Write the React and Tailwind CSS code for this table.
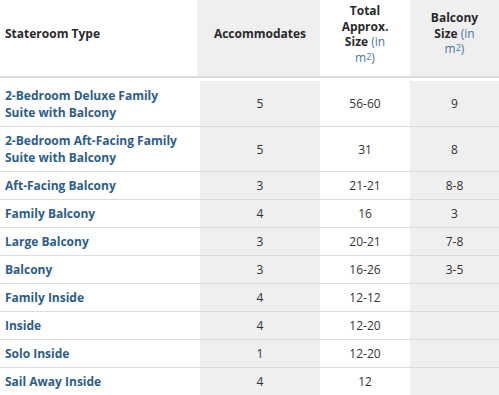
import React from "react";

const rows = [
  { name: ["2-Bedroom Deluxe Family", "Suite with Balcony"], acc: "5", size: "56-60", balcony: "9", h: "h-[46px]" },
  { name: ["2-Bedroom Aft-Facing Family", "Suite with Balcony"], acc: "5", size: "31", balcony: "8", h: "h-[45px]" },
  { name: ["Aft-Facing Balcony"], acc: "3", size: "21-21", balcony: "8-8", h: "h-[28px]" },
  { name: ["Family Balcony"], acc: "4", size: "16", balcony: "3", h: "h-[28px]" },
  { name: ["Large Balcony"], acc: "3", size: "20-21", balcony: "7-8", h: "h-[28px]" },
  { name: ["Balcony"], acc: "3", size: "16-26", balcony: "3-5", h: "h-[28px]" },
  { name: ["Family Inside"], acc: "4", size: "12-12", balcony: "", h: "h-[28px]" },
  { name: ["Inside"], acc: "4", size: "12-20", balcony: "", h: "h-[28px]" },
  { name: ["Solo Inside"], acc: "1", size: "12-20", balcony: "", h: "h-[28px]" },
  { name: ["Sail Away Inside"], acc: "4", size: "12", balcony: "", h: "h-[28px]" },
];

// "Size (in / m²)" split over two lines like the source
const SizeUnit = () => (
  <>
    <span>
      Size <span className="font-normal text-[#4a78a6]">(in</span>
    </span>
    <span className="font-normal text-[#4a78a6]">
      m<sup className="text-[9px] relative -top-[2px]">2</sup>)
    </span>
  </>
);

const App = () => {
  return (
    <div
      className="w-[499px] h-[395px] overflow-hidden bg-white text-[12px] text-[#333]"
      style={{ fontFamily: '"Open Sans", "Liberation Sans", sans-serif' }}
    >
      {/* header */}
      <div className="flex h-[78px] border-b-2 border-[#dcdcdc] font-bold leading-[15.5px] text-[#2a2a2a]">
        <div className="w-[197px] flex items-center pl-[5px] pb-[9px]">Stateroom Type</div>
        <div className="w-[123px] bg-[#efefef] flex items-center justify-center pb-[9px] pl-[3px]">
          Accommodates
        </div>
        <div className="w-[90px] flex flex-col items-center justify-center text-center pb-[9px] pt-[1px]">
          <span>Total</span>
          <span>Approx.</span>
          <SizeUnit />
        </div>
        <div className="w-[89px] bg-[#efefef] flex flex-col items-center justify-center text-center pb-[9px]">
          <span>Balcony</span>
          <SizeUnit />
        </div>
      </div>

      {/* body */}
      <div className="mt-[3px]">
        {rows.map((r, i) => (
          <div key={i} className={`flex border-b border-[#dcdcdc] leading-[17px] ${r.h}`}>
            <div className="w-[200px] flex flex-col justify-center pl-[5px] font-bold text-[#2b5d8c]">
              {r.name.map((n) => (
                <span key={n}>{n}</span>
              ))}
            </div>
            <div className="w-[120px] bg-[#efefef] flex items-center justify-center">{r.acc}</div>
            <div className="w-[90px] flex items-center justify-center">{r.size}</div>
            <div className="w-[89px] bg-[#efefef] flex items-center justify-center">{r.balcony}</div>
          </div>
        ))}
      </div>
    </div>
  );
};

export default App;
